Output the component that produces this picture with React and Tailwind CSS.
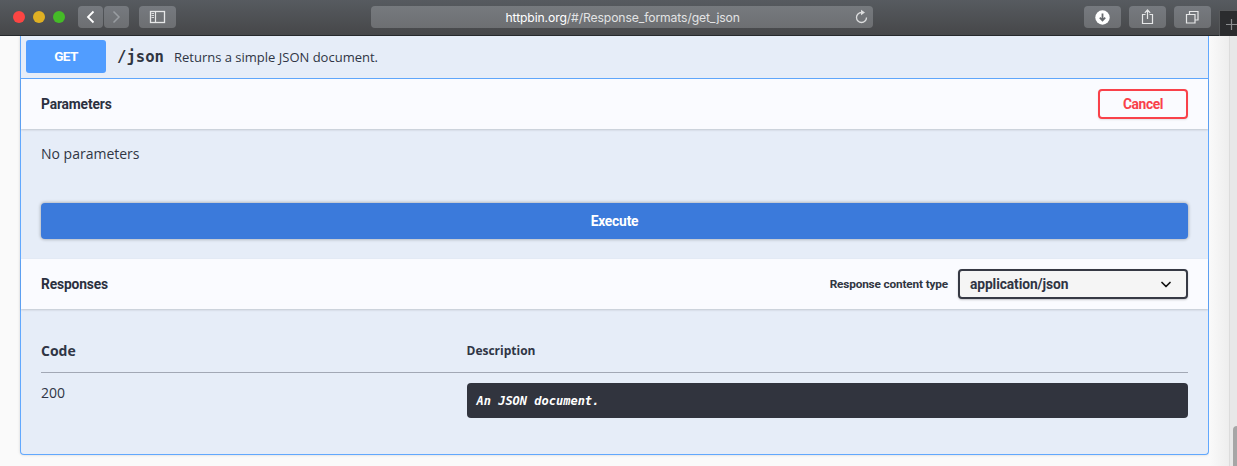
import React from "react";

const toolButton =
  "flex h-[22px] items-center justify-center rounded-[4px] bg-gradient-to-b from-[#767a7f] to-[#6d6f72] text-[#e6e7e8]";

function Toolbar() {
  return (
    <header className="relative flex h-9 shrink-0 items-start border-b border-[#26292c] bg-gradient-to-b from-[#575b60] to-[#464749] pt-1.5">
      <div className="ml-[13px] mt-[5px] flex gap-2">
        <span className="size-3 rounded-full bg-[#fc4543]" />
        <span className="size-3 rounded-full bg-[#dfb023]" />
        <span className="size-3 rounded-full bg-[#45bb27]" />
      </div>
      <div className="ml-[13px] flex gap-px">
        <button className={toolButton + " w-[25px]"}>
          <svg width="25" height="22" fill="none" stroke="#fff" strokeWidth="1.8">
            <path d="M15.5 5.5 10 11l5.5 5.5" />
          </svg>
        </button>
        <button className={toolButton + " w-[25px]"}>
          <svg width="25" height="22" fill="none" stroke="#999da1" strokeWidth="1.5">
            <path d="m9.5 5.5 5.5 5.5-5.5 5.5" />
          </svg>
        </button>
      </div>
      <button className={toolButton + " ml-2.5 w-[37px]"}>
        <svg width="37" height="22" fill="none" stroke="currentColor">
          <rect x="11.5" y="5.5" width="14" height="11" strokeWidth="1.3" />
          <path d="M16.5 5.500v11" strokeWidth="1.2" />
          <path d="M12.5 7.500h2.500M12.5 9.500h2.500M12.5 11.500h2.500" strokeWidth="0.9" />
        </svg>
      </button>
      <div className="ml-[195px] flex h-[22px] w-[502px] items-center rounded-[4px] bg-gradient-to-b from-[#767a7e] to-[#6d6f72]">
        <span className="ml-[134.5px] mt-px whitespace-nowrap font-['Inter',sans-serif] text-[12.2px] leading-[22px] tracking-[-0.12px] text-[#e2e3e4]">
          <span className="text-white">httpbin.org</span>/#/Response_formats/get_json
        </span>
        <svg className="ml-auto mr-1" width="15" height="16" fill="none" stroke="#dcddde" strokeWidth="1.3">
          <path d="M8.2 3.500H7.500A5 5 0 1 0 12.500 8.500" />
          <path d="m7 0.700 4 2.800-4 2.800Z" fill="#dcddde" stroke="none" />
        </svg>
      </div>
      <div className="ml-auto mr-[26px] flex gap-2">
        <button className={toolButton + " w-[37px]"}>
          <svg width="15" height="15">
            <circle cx="7.5" cy="7.5" r="7.2" fill="#fff" />
            <path d="M7.5 3.500v7M4.800 7.700l2.700 2.800 2.700-2.800" fill="none" stroke="#66696d" strokeWidth="1.8" />
          </svg>
        </button>
        <button className={toolButton + " w-[37px]"}>
          <svg width="37" height="22" fill="none" stroke="currentColor" strokeWidth="1.2">
            <path d="M16.5 8.500h-3v9h10v-9h-3M18.500 13V4.200M15.800 6.900l2.700-2.900 2.700 2.900" />
          </svg>
        </button>
        <button className={toolButton + " w-[37px]"}>
          <svg width="37" height="22" fill="none" stroke="currentColor" strokeWidth="1.2">
            <path d="M12.5 8.500h8.500v8.500h-8.500ZM15.500 8.500v-3h8.500v8.500h-3" />
          </svg>
        </button>
      </div>
      <div className="absolute -bottom-px right-0 flex h-[26px] w-[18px] items-center overflow-hidden border-l border-t border-[#56585a] bg-[#2b2c2e]">
        <svg className="shrink-0" width="18" height="24" fill="none" stroke="#8b8d8f" strokeWidth="1.2">
          <path d="M6 12.500h12M11.500 7v11" />
        </svg>
      </div>
    </header>
  );
}

function SectionBar({ title, children }) {
  return (
    <div className="flex h-[50px] shrink-0 items-center bg-[#fafbff] px-5 shadow-[0_1px_2px_rgba(0,0,0,0.16)]">
      <h4 className="pt-px font-['Roboto',sans-serif] text-[13.8px] font-bold tracking-[-0.15px] text-[#2b3040]">{title}</h4>
      <div className="ml-auto flex items-center">{children}</div>
    </div>
  );
}

function Operation() {
  return (
    <section className="ml-5 flex h-[419px] w-[1189px] flex-col rounded-b-[4px] border border-t-0 border-[#61a8fe] bg-[#e6edf8] shadow-[0_0_3px_rgba(0,0,0,0.16)]">
      <div className="flex h-[43px] shrink-0 items-center border-b border-[#61a8fe] pb-0.5 pl-[5px]">
        <span className="flex h-[33px] w-20 items-center justify-center rounded-[3px] bg-[#519dff] pt-px font-['Roboto',sans-serif] text-[13.6px] font-bold tracking-[-0.6px] text-white">
          GET
        </span>
        <span className="ml-[11px] pt-1 font-['DejaVu_Sans_Mono',monospace] text-[15.6px] font-bold text-[#303541]">/json</span>
        <span className="ml-2.5 whitespace-nowrap pt-[3px] font-['Open_Sans',sans-serif] text-[13px] text-[#2f3545]">
          Returns a simple JSON document.
        </span>
      </div>

      <SectionBar title="Parameters">
        <button className="h-[30px] w-[90px] rounded-[4px] border-2 border-[#f9414a] font-['Roboto',sans-serif] text-[13.8px] font-bold tracking-[-0.4px] text-[#f9414a] shadow-[0_1px_2px_rgba(0,0,0,0.1)]">
          Cancel
        </button>
      </SectionBar>

      <div className="flex h-[130px] shrink-0 flex-col px-5 pb-5 pt-[15px]">
        <p className="font-['Open_Sans',sans-serif] text-[14px] leading-5 text-[#303644]">No parameters</p>
        <button className="mt-auto h-9 rounded-[4px] bg-[#3b7adb] font-['Roboto',sans-serif] text-[13.8px] font-bold tracking-[-0.2px] text-white shadow-[0_0_3px_1px_rgba(0,0,0,0.22)]">
          Execute
        </button>
      </div>

      <SectionBar title="Responses">
        <label className="mr-2.5 whitespace-nowrap pt-0.5 font-['Roboto',sans-serif] text-[11.8px] font-bold tracking-[-0.15px] text-[#303541]">
          Response content type
        </label>
        <div className="flex h-[30px] w-[230px] items-center justify-between rounded-[4px] border-2 border-[#363944] bg-[#f5f5f5] pl-2.5 pr-[15px] shadow-[0_1px_2px_rgba(0,0,0,0.22)]">
          <span className="font-['Roboto',sans-serif] text-[13.8px] font-bold tracking-[-0.1px] text-[#303443]">application/json</span>
          <svg width="10" height="7" fill="none" stroke="#111" strokeWidth="1.7" strokeLinecap="round" strokeLinejoin="round">
            <path d="m1 1.500 4 4 4-4" />
          </svg>
        </div>
      </SectionBar>

      <div className="px-5 pt-[21px] text-[#2f3545]">
        <div className="grid h-[43px] grid-cols-[425.5px_1fr] items-center border-b border-[#a2a8b5] font-['Open_Sans',sans-serif] font-bold">
          <span className="pb-0.5 text-[14px]">Code</span>
          <span className="text-[12px]">Description</span>
        </div>
        <div className="grid grid-cols-[425.5px_1fr] pt-2.5">
          <span className="font-['Open_Sans',sans-serif] text-[14px] leading-5">200</span>
          <div className="flex h-[35px] items-center rounded-[4px] bg-[#31343e] pl-2.5 font-['DejaVu_Sans_Mono',monospace] text-[12px] font-bold italic text-white">
            An JSON document.
          </div>
        </div>
      </div>
    </section>
  );
}

export default function App() {
  return (
    <div className="flex h-[466px] w-[1237px] flex-col overflow-hidden bg-[#fafafa]">
      <Toolbar />
      <div className="flex min-h-0 flex-1">
        <Operation />
        <div className="h-[430px] w-5 bg-gradient-to-r from-[#fafafa] to-[#eeeeee]" />
        <div className="flex h-[430px] w-2 flex-col justify-end border-l border-[#dcdcdc] bg-[#e8e8e8] pl-[3px]">
          <div className="h-10 w-2 rounded-tl-[4px] bg-[#a6a6a6]" />
        </div>
      </div>
    </div>
  );
}
